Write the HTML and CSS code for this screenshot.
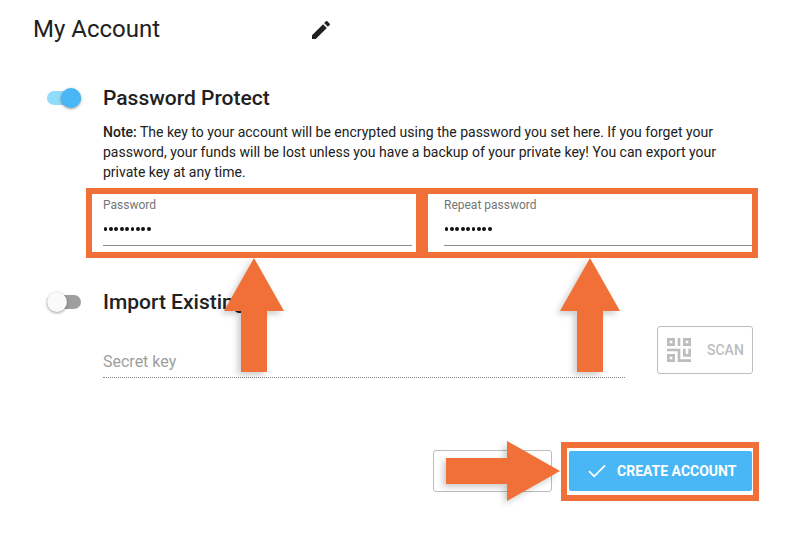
FILE: index.html
```html
<!DOCTYPE html>
<html lang="en">
<head>
<meta charset="utf-8">
<title>My Account</title>
<link rel="stylesheet" href="styles.css">
</head>
<body>
<main class="page">
  <header class="title-row">
    <h1 class="title">My Account</h1>
    <svg class="pencil" viewBox="0 0 24 24"><path d="M3 17.25V21h3.75L17.81 9.94l-3.75-3.75L3 17.25zM20.71 7.04a1 1 0 0 0 0-1.41l-2.34-2.34a1 1 0 0 0-1.41 0l-1.83 1.83 3.75 3.75 1.83-1.83z"/></svg>
  </header>

  <section class="option protect">
    <div class="switch on"><span class="thumb"></span></div>
    <div class="option-body">
      <h2 class="heading">Password Protect</h2>
      <p class="note"><b>Note:</b> The key to your account will be encrypted using the password you set here. If you forget your<br>password, your funds will be lost unless you have a backup of your private key! You can export your<br>private key at any time.</p>
      <div class="fields">
        <div class="field">
          <label class="label">Password</label>
          <div class="dots"><i></i><i></i><i></i><i></i><i></i><i></i><i></i><i></i><i></i></div>
        </div>
        <div class="field">
          <label class="label">Repeat password</label>
          <div class="dots"><i></i><i></i><i></i><i></i><i></i><i></i><i></i><i></i><i></i></div>
        </div>
      </div>
    </div>
  </section>

  <section class="option import">
    <div class="switch"><span class="thumb"></span></div>
    <div class="option-body">
      <h2 class="heading">Import Existing</h2>
      <div class="import-row">
        <div class="secret">Secret key</div>
        <button class="scan" type="button">
          <svg class="qr" viewBox="0 0 9 9"><path fill-rule="evenodd" d="M0 0h3v3H0zM1 1v1h1V1zM4 0h1v3H4zM6 0h3v3H6zM7 1v1h1V1zM0 6h3v3H0zM1 7v1h1V7zM0 4h5v4h4v1H4V5H0zM6 4h1v2h1V4h1v3H6z"/></svg>
          <span>SCAN</span>
        </button>
      </div>
    </div>
  </section>

  <footer class="actions">
    <button class="cancel" type="button"></button>
    <button class="create" type="button">
      <svg class="check" viewBox="0 0 18 14"><path d="M1 7.2 6.2 12.3 17 1.3"/></svg>
      <span>CREATE ACCOUNT</span>
    </button>
  </footer>

  <div class="frame frame-password"></div>
  <div class="frame frame-repeat"></div>
  <div class="frame frame-create"></div>
  <svg class="arrows" viewBox="0 0 785 557">
    <path d="M254 258 284 311H267V372H241V311H224z"/>
    <path d="M590 258 620 311H603V372H577V311H560z"/>
    <path d="M560 471 507 501V484H446V458H507V441z"/>
  </svg>
</main>
</body>
</html>
```
FILE: styles.css
```css
* { box-sizing: border-box; }
body {
  margin: 0;
  background: #fff;
  color: #212121;
  font-family: Roboto, "Liberation Sans", sans-serif;
}
h1, h2, p { margin: 0; }
button { font-family: inherit; padding: 0; background: #fff; border-radius: 3px; }
.page {
  position: relative;
  width: 785px;
  height: 557px;
  overflow: hidden;
  padding: 12px 32px 0 33px;
}
.title-row { display: flex; align-items: center; height: 34px; }
.title { width: 276px; font-size: 24px; font-weight: 400; line-height: 34px; }
.pencil { width: 24px; height: 24px; margin-top: 2px; fill: #212121; }

.option { display: flex; padding-left: 14px; }
.protect { margin-top: 40px; height: 204px; }
.switch {
  position: relative;
  width: 34px;
  height: 14px;
  margin: 5px 22px 0 0;
  border-radius: 7px;
  background: #9e9e9e;
}
.switch.on { background: #90dcfa; }
.thumb {
  position: absolute;
  left: 0;
  top: -3px;
  width: 20px;
  height: 20px;
  border-radius: 50%;
  background: #fafafa;
  box-shadow: 0 1px 3px rgba(0, 0, 0, .4);
}
.on .thumb { left: 14px; background: #49b6f5; }
.option-body { width: 650px; }
.heading { font-size: 21px; font-weight: 500; line-height: 24px; }
.note { margin-top: 12px; font-size: 14px; line-height: 20px; white-space: nowrap; }
.note b { font-weight: 500; }
.fields { display: flex; gap: 32px; margin-top: 15px; }
.field { width: 309px; height: 49px; border-bottom: 1px solid #8c8c8c; }
.label { display: block; font-size: 12px; line-height: 16px; color: #757575; }
.dots { display: flex; gap: 1.6px; margin-top: 14px; padding-left: .6px; }
.dots i { width: 3.8px; height: 4px; border-radius: 50%; background: #111; }

.import-row { display: flex; justify-content: space-between; margin-top: 12px; }
.secret {
  width: 522px;
  height: 52px;
  padding-top: 24px;
  border-bottom: 1px dotted #888;
  color: #9e9e9e;
  font-size: 16px;
  line-height: 24px;
}
.scan {
  display: flex;
  align-items: center;
  width: 96px;
  height: 48px;
  padding-left: 9px;
  border: 1px solid #bdbdbd;
  color: #bdbdbd;
  font-size: 14px;
  font-weight: 500;
}
.qr { width: 24px; height: 24px; margin-right: 16px; fill: #bdbdbd; }

.actions { display: flex; justify-content: flex-end; gap: 17px; margin-top: 72px; }
.cancel { width: 119px; height: 42px; border: 1px solid #bdbdbd; }
.create {
  display: flex;
  align-items: center;
  width: 183px;
  height: 40px;
  margin: 1px 1px 0 0;
  padding-left: 19px;
  border: 0;
  border-radius: 2px;
  background: #49b6f5;
  color: #fff;
  font-size: 14px;
  font-weight: 700;
  white-space: nowrap;
}
.check { width: 18px; height: 14px; margin-right: 11px; fill: none; stroke: #fff; stroke-width: 1.7; }

.frame { position: absolute; border: 6px solid #f07038; }
.frame-password { left: 86px; top: 188px; width: 336px; height: 70px; }
.frame-repeat { left: 422px; top: 188px; width: 336px; height: 70px; }
.frame-create { left: 561px; top: 442px; width: 198px; height: 59px; }
.arrows {
  position: absolute;
  left: 0;
  top: 0;
  width: 785px;
  height: 557px;
  fill: #f07038;
  filter: drop-shadow(-3px 3px 3px rgba(0, 0, 0, .2));
}
```
